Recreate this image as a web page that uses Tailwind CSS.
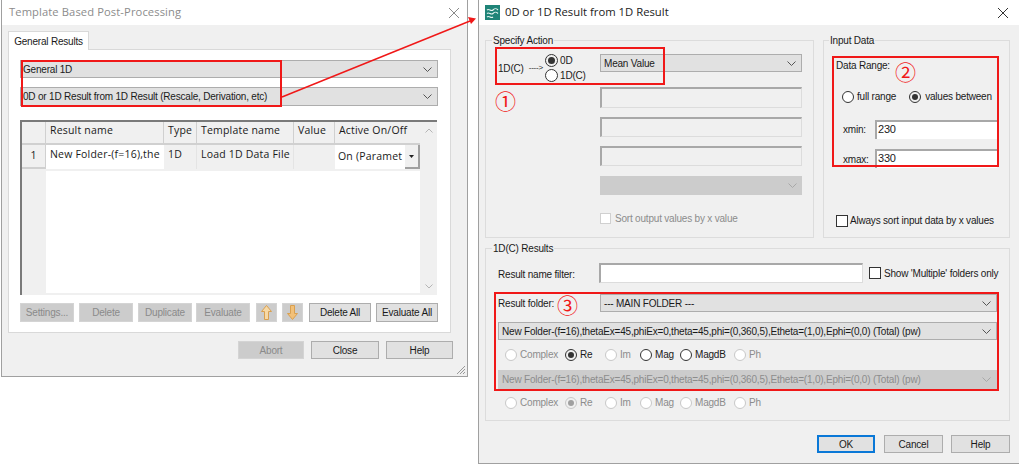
<!DOCTYPE html>
<html lang="en">
<head>
    <meta charset="UTF-8">
    <title>Template Based Post-Processing</title>
    <script src="https://cdn.jsdelivr.net/npm/@tailwindcss/browser@4"></script>
</head>
<body class="bg-white">
<div class="relative w-[1019px] h-[468px] overflow-hidden bg-white font-['Liberation_Sans',sans-serif] text-[10px] tracking-[-0.2px] text-[#1a1a1a]">

    <!-- left dialog -->
    <div class="absolute left-[1px] top-0 w-[467px] h-[377px] bg-[#f0f0f0] border-x border-b border-[#a0a0a0] flex flex-col">
        <div class="h-[25px] shrink-0 bg-white flex items-center justify-between pl-[7px] pr-[8px] font-['Open_Sans',sans-serif] text-[11.2px] tracking-[0.1px] text-[#8c8c8c]">
            <span>Template Based Post-Processing</span>
            <svg class="w-[10px] h-[10px]" viewBox="0 0 10 10"><path d="M0 0L10 10M10 0L0 10" stroke="#8a8a8a" stroke-width="1"/></svg>
        </div>
        <div class="pl-[6px] pt-[6px]">
            <div class="w-[81px] h-[19px] bg-white border-x border-t border-[#d9d9d9] flex items-center justify-center relative z-10 -mb-px">General Results</div>
            <div class="w-[443px] h-[284px] bg-white border border-[#d9d9d9] pl-[11px] pt-[10px]">
                <div class="flex flex-col gap-[9px] w-[418px]">
                    <div class="h-[18px] bg-[#e1e1e1] border border-[#adadad] flex items-center justify-between pl-[2px] pr-[5px]">
                        <span>General 1D</span>
                        <svg class="w-[9px] h-[5px]" viewBox="0 0 9 5"><path d="M0.5 0.5L4.5 4.5L8.5 0.5" fill="none" stroke="#555"/></svg>
                    </div>
                    <div class="h-[19px] bg-[#e1e1e1] border border-[#adadad] flex items-center justify-between pl-[2px] pr-[5px]">
                        <span>0D or 1D Result from 1D Result (Rescale, Derivation, etc)</span>
                        <svg class="w-[9px] h-[5px]" viewBox="0 0 9 5"><path d="M0.5 0.5L4.5 4.5L8.5 0.5" fill="none" stroke="#555"/></svg>
                    </div>
                </div>
                <!-- results table -->
                <div class="mt-[14px] w-[417px] h-[175px] border-t-2 border-l-2 border-[#7a7a7a] flex font-['Open_Sans',sans-serif] text-[10.5px] tracking-[0.2px]">
                    <div class="w-[398px] flex flex-col">
                        <div class="h-[23px] grid grid-cols-[24px_118px_33px_97px_41px_85px] bg-[#f0f0f0]">
                            <div class="border-r border-b-2 border-[#d0d0d0]"></div>
                            <div class="border-r border-b-2 border-[#d0d0d0] pl-[4px] leading-[17px]">Result name</div>
                            <div class="border-r border-b-2 border-[#d0d0d0] pl-[4px] leading-[17px]">Type</div>
                            <div class="border-r border-b-2 border-[#d0d0d0] pl-[4px] leading-[17px]">Template name</div>
                            <div class="border-r border-b-2 border-[#d0d0d0] pl-[4px] leading-[17px]">Value</div>
                            <div class="border-b-2 border-[#d0d0d0] pl-[4px] leading-[17px]">Active On/Off</div>
                        </div>
                        <div class="h-[24px] grid grid-cols-[24px_118px_33px_97px_41px_85px]">
                            <div class="bg-[#f0f0f0] border-r border-b-2 border-[#d0d0d0] flex items-center justify-center">1</div>
                            <div class="bg-white pl-[4px] leading-[18px] whitespace-nowrap">New Folder-(f=16),the</div>
                            <div class="bg-[#f0f0f0] border-r border-[#e4e4e4] pl-[4px] leading-[18px]">1D</div>
                            <div class="bg-[#f0f0f0] border-r border-[#e4e4e4] pl-[4px] leading-[18px] whitespace-nowrap">Load 1D Data File</div>
                            <div class="bg-[#f0f0f0]"></div>
                            <div class="bg-white pl-[3px] flex items-center justify-between relative">
                                <span class="whitespace-nowrap">On (Paramet</span>
                                <div class="w-[15px] h-full shrink-0 bg-[#f0f0f0] border-r-2 border-b-2 border-[#a0a0a0] flex items-center justify-center">
                                    <svg class="w-[5px] h-[3px]" viewBox="0 0 5 3"><path d="M0 0H5L2.5 3Z" fill="#222"/></svg>
                                </div>
                            </div>
                        </div>
                        <div class="flex-1 flex border-t-2 border-[#f0f0f0]">
                            <div class="w-[24px] bg-[#f0f0f0]"></div>
                            <div class="flex-1 bg-white"></div>
                        </div>
                        <div class="h-[2px] bg-[#f0f0f0]"></div>
                    </div>
                    <div class="w-[17px] bg-[#f0f0f0] flex flex-col justify-between items-center py-[6px]">
                        <svg class="w-[8px] h-[5px]" viewBox="0 0 8 5"><path d="M0.5 4.5L4 1L7.5 4.5" fill="none" stroke="#b5b5b5"/></svg>
                        <svg class="w-[8px] h-[5px]" viewBox="0 0 8 5"><path d="M0.5 0.5L4 4L7.5 0.5" fill="none" stroke="#b5b5b5"/></svg>
                    </div>
                </div>
                <div class="mt-[8px] flex">
                    <div class="w-[54px] h-[19px] bg-[#cccccc] border border-[#d4d4d4] text-[#8a8a8a] flex items-center justify-center">Settings...</div>
                    <div class="ml-[5px] w-[54px] h-[19px] bg-[#cccccc] border border-[#d4d4d4] text-[#8a8a8a] flex items-center justify-center">Delete</div>
                    <div class="ml-[5px] w-[54px] h-[19px] bg-[#cccccc] border border-[#d4d4d4] text-[#8a8a8a] flex items-center justify-center">Duplicate</div>
                    <div class="ml-[4px] w-[54px] h-[19px] bg-[#cccccc] border border-[#d4d4d4] text-[#8a8a8a] flex items-center justify-center">Evaluate</div>
                    <div class="ml-[6px] w-[21px] h-[19px] bg-[#cccccc] border border-[#d4d4d4] flex items-center justify-center">
                        <svg class="w-[11px] h-[15px]" viewBox="0 0 11 15"><path d="M5.5 0.5L10.5 6.5H7.5V14.5H3.5V6.5H0.5Z" fill="#f7d9a6" stroke="#d9a050"/></svg>
                    </div>
                    <div class="ml-[5px] w-[21px] h-[19px] bg-[#cccccc] border border-[#d4d4d4] flex items-center justify-center">
                        <svg class="w-[11px] h-[15px]" viewBox="0 0 11 15"><path d="M5.5 14.5L10.5 8.5H7.5V0.5H3.5V8.5H0.5Z" fill="#f2c078" stroke="#d9a050"/></svg>
                    </div>
                    <div class="ml-[6px] w-[62px] h-[19px] bg-[#e1e1e1] border border-[#adadad] flex items-center justify-center">Delete All</div>
                    <div class="ml-[5px] w-[62px] h-[19px] bg-[#e1e1e1] border border-[#adadad] flex items-center justify-center">Evaluate All</div>
                </div>
            </div>
            <div class="mt-[8px] w-[445px] flex justify-end gap-[7px]">
                <div class="w-[66px] h-[18px] bg-[#cccccc] border border-[#d4d4d4] text-[#8a8a8a] flex items-center justify-center">Abort</div>
                <div class="w-[68px] h-[18px] bg-[#e1e1e1] border border-[#adadad] flex items-center justify-center">Close</div>
                <div class="w-[67px] h-[18px] bg-[#e1e1e1] border border-[#adadad] flex items-center justify-center">Help</div>
            </div>
        </div>
        <svg class="absolute right-[1px] bottom-[1px] w-[10px] h-[10px]" viewBox="0 0 10 10"><path d="M9 1L1 9M9 4L4 9M9 7L7 9" stroke="#999" fill="none"/></svg>
    </div>

    <!-- right dialog -->
    <div class="absolute left-[478px] top-0 w-[541px] h-[464px] bg-[#f0f0f0] border-l border-b border-[#a0a0a0] flex flex-col">
        <div class="h-[25px] shrink-0 bg-white flex items-center justify-between pl-[6px] pr-[11px] font-['Open_Sans',sans-serif] text-[11.3px] tracking-normal text-[#222]">
            <div class="flex items-center gap-[5px]">
                <svg class="w-[15px] h-[15px]" viewBox="0 0 15 15"><rect width="15" height="15" fill="#1f8478"/><path d="M2 5C4 3 6 7 8 5S11 3 13 5M2 8.5C4 6.5 6 10.5 8 8.5S11 6.5 13 8.5M2 12C4 10 6 14 8 12" stroke="#e8f6f2" stroke-width="1.1" fill="none"/></svg>
                <span>0D or 1D Result from 1D Result</span>
            </div>
            <svg class="w-[10px] h-[10px]" viewBox="0 0 10 10"><path d="M0 0L10 10M10 0L0 10" stroke="#333" stroke-width="1"/></svg>
        </div>

        <div class="pl-[6px] pt-[15px]">
            <div class="flex gap-[9px]">
                <!-- specify action -->
                <div class="relative w-[329px] h-[198px] border border-[#dcdcdc] flex">
                    <span class="absolute left-[6px] -top-[6px] bg-[#f0f0f0] px-px leading-[12px]">Specify Action</span>
                    <div class="w-[114px] pl-[12px] pt-[13px]">
                        <div class="flex items-center h-[28px]">
                            <span>1D(C)</span>
                            <span class="ml-[5px] text-[8px]">----&gt;</span>
                            <div class="ml-[2px] flex flex-col gap-[2px]">
                                <div class="flex items-center gap-[2px]">
                                    <span class="w-[13px] h-[13px] rounded-full border border-[#333] flex items-center justify-center"><span class="w-[7px] h-[7px] rounded-full bg-[#333]"></span></span>
                                    <span class="leading-[11px]">0D</span>
                                </div>
                                <div class="flex items-center gap-[2px]">
                                    <span class="w-[13px] h-[13px] rounded-full border border-[#333] bg-white"></span>
                                    <span class="leading-[11px]">1D(C)</span>
                                </div>
                            </div>
                        </div>
                        <div class="mt-[6px] -ml-[3px] font-['Noto_Sans_CJK_SC',sans-serif] text-[21px] leading-[24px] text-[#f01818]">①</div>
                    </div>
                    <div class="w-[202px] pt-[13px]">
                        <div class="h-[18px] bg-[#e1e1e1] border border-[#adadad] flex items-center justify-between pl-[3px] pr-[5px]">
                            <span>Mean Value</span>
                            <svg class="w-[9px] h-[5px]" viewBox="0 0 9 5"><path d="M0.5 0.5L4.5 4.5L8.5 0.5" fill="none" stroke="#555"/></svg>
                        </div>
                        <div class="mt-[15px] h-[21px] border-t-2 border-l-2 border-r border-b border-t-[#a8a8a8] border-l-[#a8a8a8] border-r-[#dcdcdc] border-b-[#dcdcdc] bg-[#f0f0f0]"></div>
                        <div class="mt-[9px] h-[20px] border-t-2 border-l-2 border-r border-b border-t-[#a8a8a8] border-l-[#a8a8a8] border-r-[#dcdcdc] border-b-[#dcdcdc] bg-[#f0f0f0]"></div>
                        <div class="mt-[9px] h-[20px] border-t-2 border-l-2 border-r border-b border-t-[#a8a8a8] border-l-[#a8a8a8] border-r-[#dcdcdc] border-b-[#dcdcdc] bg-[#f0f0f0]"></div>
                        <div class="mt-[10px] h-[19px] bg-[#cccccc] flex items-center justify-end pr-[5px]">
                            <svg class="w-[9px] h-[5px]" viewBox="0 0 9 5"><path d="M0.5 0.5L4.5 4.5L8.5 0.5" fill="none" stroke="#a8a8a8"/></svg>
                        </div>
                        <div class="mt-[16px] flex items-center gap-[4px] text-[#8c8c8c]">
                            <span class="w-[11px] h-[11px] border border-[#d0d0d0] bg-white"></span>
                            <span>Sort output values by x value</span>
                        </div>
                    </div>
                </div>
                <!-- input data -->
                <div class="relative w-[187px] h-[198px] border border-[#dcdcdc] pl-[13px]">
                    <span class="absolute left-[5px] -top-[6px] bg-[#f0f0f0] px-px leading-[12px]">Input Data</span>
                    <div class="pt-[18px] flex items-start">
                        <span class="leading-[12px] -ml-px pt-px">Data Range:</span>
                        <span class="ml-[5px] font-['Noto_Sans_CJK_SC',sans-serif] text-[21px] leading-[24px] text-[#f01818]">②</span>
                    </div>
                    <div class="mt-[6px] pl-[5px] flex items-center">
                        <span class="w-[12px] h-[12px] rounded-full border border-[#333] bg-white"></span>
                        <span class="ml-[3px]">full range</span>
                        <span class="ml-[13px] w-[12px] h-[12px] rounded-full border border-[#333] flex items-center justify-center"><span class="w-[6px] h-[6px] rounded-full bg-[#333]"></span></span>
                        <span class="ml-[4px]">values between</span>
                    </div>
                    <div class="mt-[16px] pl-[6px] flex items-center">
                        <span class="w-[32px]">xmin:</span>
                        <div class="w-[122px] h-[19px] bg-white border-t-2 border-l-2 border-[#a8a8a8] pl-px text-[11px] leading-[15px]">230</div>
                    </div>
                    <div class="mt-[10px] pl-[6px] flex items-center">
                        <span class="w-[32px] pt-[2px]">xmax:</span>
                        <div class="w-[122px] h-[19px] bg-white border-t-2 border-l-2 border-[#a8a8a8] pl-px text-[11px] leading-[15px]">330</div>
                    </div>
                    <div class="mt-[45px] flex items-center gap-[2px] -ml-px">
                        <span class="w-[12px] h-[12px] border border-[#333] bg-white"></span>
                        <span>Always sort input data by x values</span>
                    </div>
                </div>
            </div>

            <!-- 1D(C) results -->
            <div class="relative mt-[10px] w-[525px] h-[173px] border border-[#dcdcdc] pl-[12px] pt-[14px]">
                <span class="absolute left-[6px] -top-[6px] bg-[#f0f0f0] px-px leading-[12px]">1D(C) Results</span>
                <div class="flex items-center h-[20px]">
                    <span class="w-[101px] pt-[2px]">Result name filter:</span>
                    <div class="w-[264px] h-[20px] bg-white border-t-2 border-l-2 border-[#a8a8a8] border-r border-b border-r-[#dcdcdc] border-b-[#dcdcdc]"></div>
                    <span class="ml-[6px] w-[12px] h-[12px] border border-[#333] bg-white"></span>
                    <span class="ml-[3px]">Show 'Multiple' folders only</span>
                </div>
                <div class="mt-[11px] flex items-center h-[18px]">
                    <span class="w-[102px] relative">Result folder:
                        <span class="absolute left-[59px] -top-[4px] font-['Noto_Sans_CJK_SC',sans-serif] text-[21px] leading-[24px] text-[#f01818]">③</span>
                    </span>
                    <div class="w-[397px] h-[18px] bg-[#e1e1e1] border border-[#adadad] flex items-center justify-between pl-[3px] pr-[5px]">
                        <span>--- MAIN FOLDER ---</span>
                        <svg class="w-[9px] h-[5px]" viewBox="0 0 9 5"><path d="M0.5 0.5L4.5 4.5L8.5 0.5" fill="none" stroke="#555"/></svg>
                    </div>
                </div>
                <div class="mt-[10px] w-[499px] h-[18px] bg-[#e1e1e1] border border-[#adadad] flex items-center justify-between pl-[3px] pr-[5px]">
                    <span>New Folder-(f=16),thetaEx=45,phiEx=0,theta=45,phi=(0,360,5),Etheta=(1,0),Ephi=(0,0) (Total) (pw)</span>
                    <svg class="w-[9px] h-[5px]" viewBox="0 0 9 5"><path d="M0.5 0.5L4.5 4.5L8.5 0.5" fill="none" stroke="#555"/></svg>
                </div>
                <div class="mt-[7px] pl-[7px] h-[12px] grid grid-cols-[60px_40px_35px_40px_54px_40px]">
                    <div class="flex items-center gap-[3px] text-[#8c8c8c]"><span class="w-[12px] h-[12px] rounded-full border border-[#c8c8c8] bg-white"></span>Complex</div>
                    <div class="flex items-center gap-[3px]"><span class="w-[12px] h-[12px] rounded-full border border-[#333] flex items-center justify-center"><span class="w-[6px] h-[6px] rounded-full bg-[#333]"></span></span>Re</div>
                    <div class="flex items-center gap-[3px] text-[#8c8c8c]"><span class="w-[12px] h-[12px] rounded-full border border-[#c8c8c8] bg-white"></span>Im</div>
                    <div class="flex items-center gap-[3px]"><span class="w-[12px] h-[12px] rounded-full border border-[#333] bg-white"></span>Mag</div>
                    <div class="flex items-center gap-[3px]"><span class="w-[12px] h-[12px] rounded-full border border-[#333] bg-white"></span>MagdB</div>
                    <div class="flex items-center gap-[3px] text-[#8c8c8c]"><span class="w-[12px] h-[12px] rounded-full border border-[#c8c8c8] bg-white"></span>Ph</div>
                </div>
                <div class="mt-[11px] w-[499px] h-[19px] bg-[#cccccc] text-[#8c8c8c] flex items-center justify-between pl-[4px] pr-[6px]">
                    <span>New Folder-(f=16),thetaEx=45,phiEx=0,theta=45,phi=(0,360,5),Etheta=(1,0),Ephi=(0,0) (Total) (pw)</span>
                    <svg class="w-[9px] h-[5px]" viewBox="0 0 9 5"><path d="M0.5 0.5L4.5 4.5L8.5 0.5" fill="none" stroke="#a8a8a8"/></svg>
                </div>
                <div class="mt-[6px] pl-[7px] h-[12px] grid grid-cols-[60px_40px_35px_40px_54px_40px] text-[#8c8c8c]">
                    <div class="flex items-center gap-[3px]"><span class="w-[12px] h-[12px] rounded-full border border-[#c8c8c8] bg-white"></span>Complex</div>
                    <div class="flex items-center gap-[3px]"><span class="w-[12px] h-[12px] rounded-full border border-[#c8c8c8] flex items-center justify-center"><span class="w-[6px] h-[6px] rounded-full bg-[#a0a0a0]"></span></span>Re</div>
                    <div class="flex items-center gap-[3px]"><span class="w-[12px] h-[12px] rounded-full border border-[#c8c8c8] bg-white"></span>Im</div>
                    <div class="flex items-center gap-[3px]"><span class="w-[12px] h-[12px] rounded-full border border-[#c8c8c8] bg-white"></span>Mag</div>
                    <div class="flex items-center gap-[3px]"><span class="w-[12px] h-[12px] rounded-full border border-[#c8c8c8] bg-white"></span>MagdB</div>
                    <div class="flex items-center gap-[3px]"><span class="w-[12px] h-[12px] rounded-full border border-[#c8c8c8] bg-white"></span>Ph</div>
                </div>
            </div>

            <div class="mt-[14px] w-[525px] flex justify-end">
                <div class="w-[58px] h-[18px] bg-[#e1e1e1] border-2 border-[#0a78d7] flex items-center justify-center">OK</div>
                <div class="ml-[9px] w-[59px] h-[18px] bg-[#e1e1e1] border border-[#adadad] flex items-center justify-center">Cancel</div>
                <div class="ml-[8px] w-[59px] h-[18px] bg-[#e1e1e1] border border-[#adadad] flex items-center justify-center">Help</div>
            </div>
        </div>
    </div>

    <!-- red annotations over the screenshot -->
    <div class="absolute left-[21px] top-[60px] w-[261px] h-[47px] border-2 border-[#f01818]"></div>
    <div class="absolute left-[495px] top-[47px] w-[170px] h-[38px] border-2 border-[#f01818]"></div>
    <div class="absolute left-[832px] top-[56px] w-[167px] h-[111px] border-2 border-[#f01818]"></div>
    <div class="absolute left-[494px] top-[292px] w-[505px] h-[99px] border-2 border-[#f01818]"></div>
    <svg class="absolute left-0 top-0 w-[1019px] h-[468px] pointer-events-none" viewBox="0 0 1019 468">
        <path d="M282 97L470 21" stroke="#f01818" stroke-width="1.5" fill="none"/>
        <path d="M476 18.5L468 17L471 24Z" fill="#f01818"/>
    </svg>
</div>
</body>
</html>
